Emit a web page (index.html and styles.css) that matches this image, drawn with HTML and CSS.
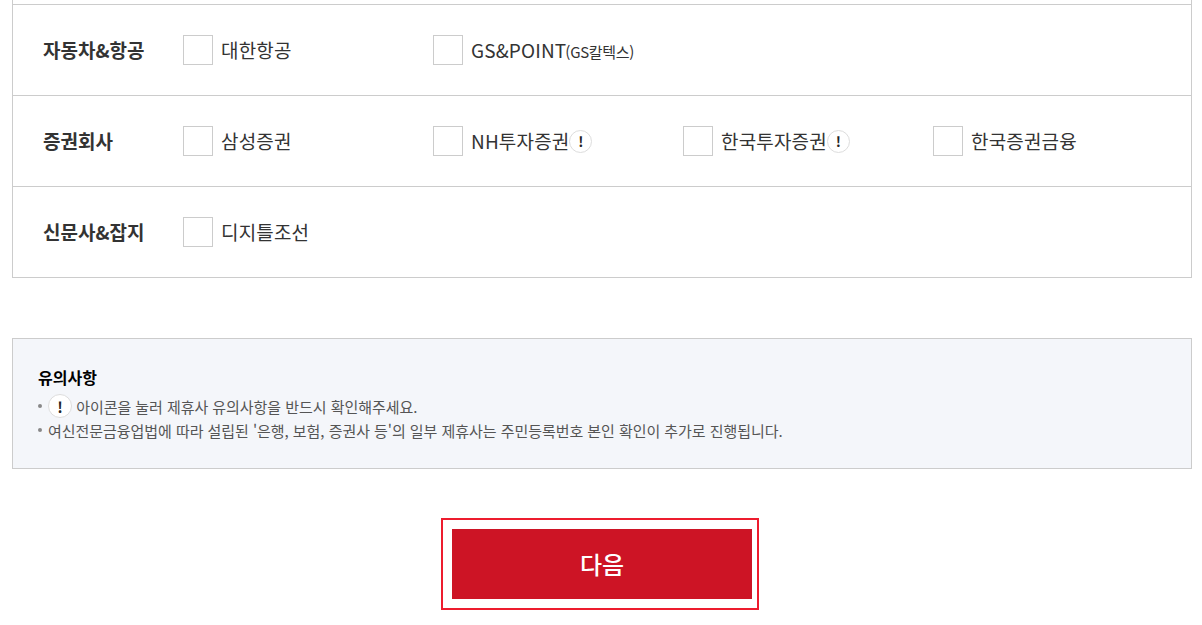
FILE: index.html
```html
<!DOCTYPE html>
<html lang="ko">
<head>
    <meta charset="UTF-8">
    <meta name="viewport" content="width=device-width, initial-scale=1.0">
    <title>제휴사 선택</title>
    <link rel="stylesheet" href="styles.css">
</head>
<body>
    <div class="container">
        <div class="partner-table">
            <div class="partner-row">
                <div class="partner-title">자동차&amp;항공</div>
                <div class="partner-list">
                    <label class="partner"><span class="check"></span><span class="name">대한항공</span></label>
                    <label class="partner"><span class="check"></span><span class="name">GS&amp;POINT<small>(GS칼텍스)</small></span></label>
                </div>
            </div>
            <div class="partner-row">
                <div class="partner-title">증권회사</div>
                <div class="partner-list">
                    <label class="partner"><span class="check"></span><span class="name">삼성증권</span></label>
                    <label class="partner"><span class="check"></span><span class="name">NH투자증권</span><span class="info">!</span></label>
                    <label class="partner"><span class="check"></span><span class="name">한국투자증권</span><span class="info">!</span></label>
                    <label class="partner"><span class="check"></span><span class="name">한국증권금융</span></label>
                </div>
            </div>
            <div class="partner-row">
                <div class="partner-title">신문사&amp;잡지</div>
                <div class="partner-list">
                    <label class="partner"><span class="check"></span><span class="name">디지틀조선</span></label>
                </div>
            </div>
        </div>

        <div class="notice">
            <p class="notice-title">유의사항</p>
            <ul>
                <li><span class="info info-large">!</span> 아이콘을 눌러 제휴사 유의사항을 반드시 확인해주세요.</li>
                <li>여신전문금융업법에 따라 설립된 '은행, 보험, 증권사 등'의 일부 제휴사는 주민등록번호 본인 확인이 추가로 진행됩니다.</li>
            </ul>
        </div>

        <div class="actions">
            <div class="next-frame">
                <button class="next-button">다음</button>
            </div>
        </div>
    </div>
</body>
</html>
```

FILE: styles.css
```css
* {
    box-sizing: border-box;
}

html, body {
    margin: 0;
    padding: 0;
    background-color: #fff;
}

body {
    font-family: "Noto Sans CJK KR", "Noto Sans", sans-serif;
    color: #333;
    overflow: hidden;
    height: 625px;
}

.container {
    width: 1180px;
    margin-left: 12px;
}

.partner-table {
    padding-top: 4px;
    border-left: 1px solid #ccc;
    border-right: 1px solid #ccc;
    border-bottom: 1px solid #ccc;
}

.partner-row {
    display: flex;
    align-items: center;
    height: 91px;
    border-top: 1px solid #ccc;
}

.partner-title {
    width: 170px;
    padding-left: 30px;
    padding-bottom: 2px;
    font-size: 19px;
    font-weight: 700;
}

.partner-list {
    display: flex;
}

.partner {
    display: flex;
    align-items: center;
    width: 250px;
}

.check {
    width: 30px;
    height: 30px;
    border: 1px solid #ccc;
    background-color: #fff;
    margin-right: 8px;
}

.name {
    font-size: 19px;
    letter-spacing: 0.15px;
    padding-bottom: 2px;
}

.name small {
    margin-left: -1px;
    font-size: 15px;
    letter-spacing: -0.3px;
}

.info {
    display: inline-flex;
    align-items: center;
    justify-content: center;
    width: 23px;
    height: 23px;
    border: 1px solid #ddd;
    border-radius: 50%;
    background-color: #fff;
    font-size: 14px;
    font-weight: 700;
    color: #222;
}

.notice {
    margin-top: 60px;
    height: 131px;
    padding: 28px 25px 0;
    background-color: #f4f6fa;
    border: 1px solid #ccc;
}

.notice-title {
    margin: 0;
    font-size: 16px;
    line-height: 20px;
    font-weight: 700;
    color: #000;
}

.notice ul {
    margin: 7px 0 0;
    padding: 0;
    list-style: none;
}

.notice li {
    position: relative;
    display: flex;
    align-items: center;
    height: 24px;
    padding-left: 10px;
    font-size: 15px;
    color: #555;
    letter-spacing: -0.05px;
    white-space: pre-wrap;
}

.notice li::before {
    content: "";
    position: absolute;
    left: 0;
    top: 10px;
    width: 4px;
    height: 4px;
    border-radius: 50%;
    background-color: #888;
}

.info-large {
    width: 24px;
    height: 24px;
    font-size: 15px;
}

.actions {
    display: flex;
    justify-content: center;
    margin-top: 49px;
    padding-right: 4px;
}

.next-frame {
    width: 318px;
    height: 92px;
    padding: 9px 5px 9px 9px;
    border: 2px solid #ed1c2e;
}

.next-button {
    display: block;
    width: 300px;
    height: 70px;
    padding: 0 0 2px;
    border: none;
    background-color: #cd1425;
    color: #fff;
    font-family: inherit;
    font-size: 24px;
    font-weight: 500;
}
```
